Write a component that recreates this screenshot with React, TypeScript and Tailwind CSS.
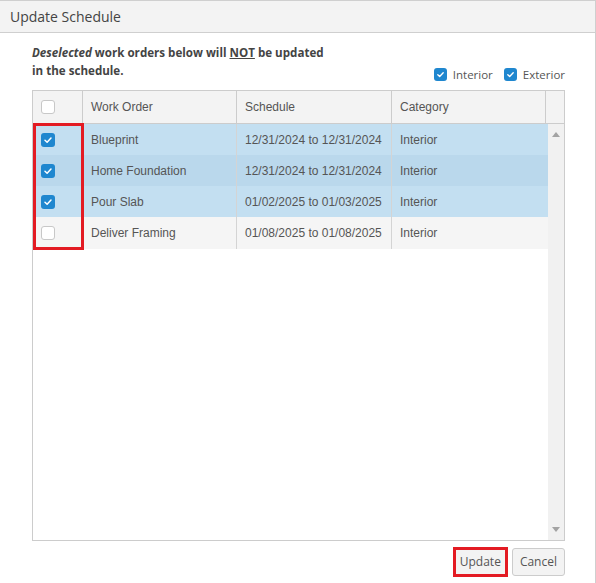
import React from "react";

function Box({ checked, size = 14 }: { checked: boolean; size?: number }) {
  if (checked) {
    return (
      <span
        className="inline-flex items-center justify-center rounded-[3px] bg-[#1f87cf]"
        style={{ width: size, height: size }}
      >
        <svg width={size - 4} height={size - 4} viewBox="0 0 10 10">
          <path d="M2 5.2 L4.1 7.2 L8 3" fill="none" stroke="#fff" strokeWidth="1.5" strokeLinecap="round" strokeLinejoin="round" />
        </svg>
      </span>
    );
  }
  return (
    <span
      className="inline-block rounded-[3px] border border-[#c8c8c8] bg-white"
      style={{ width: size, height: size }}
    />
  );
}

const rows = [
  { checked: true, name: "Blueprint", sched: "12/31/2024 to 12/31/2024", cat: "Interior", bg: "bg-[#c3dff1]" },
  { checked: true, name: "Home Foundation", sched: "12/31/2024 to 12/31/2024", cat: "Interior", bg: "bg-[#bad8ec]" },
  { checked: true, name: "Pour Slab", sched: "01/02/2025 to 01/03/2025", cat: "Interior", bg: "bg-[#c3dff1]" },
  { checked: false, name: "Deliver Framing", sched: "01/08/2025 to 01/08/2025", cat: "Interior", bg: "bg-[#f5f5f5]" },
];

export default function App() {
  return (
    <div className="w-[596px] h-[583px] bg-white overflow-hidden border-t border-r border-[#cfcfcf] text-[#555]" style={{ fontFamily: '"Liberation Sans", Arial, sans-serif' }}>
      <div
        className="h-[32px] bg-[#f3f3f3] border-b border-[#cfcfcf] flex items-center pl-[10px] text-[14px] text-[#444]"
        style={{ fontFamily: '"Open Sans", "Noto Sans", sans-serif' }}
      >
        Update Schedule
      </div>
      <div className="pl-[32px] pr-[30px]">
        <div className="flex items-end justify-between mt-[11px] mb-[9px]">
          <div
            className="text-[11.6px] font-bold leading-[18px] text-[#444] mb-[1px]"
            style={{ fontFamily: '"Open Sans", "Noto Sans", sans-serif' }}
          >
            <div>
              <i>Deselected</i> work orders below will <u>NOT</u> be updated
            </div>
            <div>in the schedule.</div>
          </div>
          <div className="flex items-center text-[11.5px] text-[#555] mb-[-2px]" style={{ fontFamily: '"Open Sans", "Noto Sans", sans-serif' }}>
            <Box checked size={13} />
            <span className="ml-[6px] mr-[11px]">Interior</span>
            <Box checked size={13} />
            <span className="ml-[6px]">Exterior</span>
          </div>
        </div>
        <div className="border border-[#cccccc] h-[451px] flex flex-col text-[12px]">
          <div className="flex h-[33px] bg-[#f3f3f3] border-b border-[#cccccc] shrink-0">
            <div className="w-[50px] border-r border-[#cccccc] flex items-center pl-[8px]">
              <Box checked={false} />
            </div>
            <div className="w-[154px] border-r border-[#cccccc] flex items-center pl-[8px]">Work Order</div>
            <div className="w-[155px] border-r border-[#cccccc] flex items-center pl-[8px]">Schedule</div>
            <div className="w-[154px] border-r border-[#cccccc] flex items-center pl-[8px]">Category</div>
            <div className="flex-1" />
          </div>
          <div className="flex flex-1 min-h-0">
            <div className="w-[515px] relative">
              {rows.map((r, i) => (
                <div key={i} className={`flex ${r.bg}`} style={{ height: i === 3 ? 32 : 31 }}>
                  <div className="w-[50px] border-r border-[#d4d4d4] flex items-center pl-[8px]">
                    <Box checked={r.checked} />
                  </div>
                  <div className="w-[154px] border-r border-[#d4d4d4] flex items-center pl-[8px]">{r.name}</div>
                  <div className="w-[155px] border-r border-[#d4d4d4] flex items-center pl-[8px]">{r.sched}</div>
                  <div className="flex-1 flex items-center pl-[8px]">{r.cat}</div>
                </div>
              ))}
              <div className="absolute left-0 top-[-1px] w-[51px] h-[127px] border-[3px] border-[#e31b23]" />
            </div>
            <div className="flex-1 bg-[#f1f1f1] flex flex-col justify-between items-center py-[8px]">
              <svg width="8" height="5" viewBox="0 0 8 5"><path d="M0 5 L4 0 L8 5 Z" fill="#a3a3a3" /></svg>
              <svg width="8" height="5" viewBox="0 0 8 5"><path d="M0 0 L4 5 L8 0 Z" fill="#a3a3a3" /></svg>
            </div>
          </div>
        </div>
        <div className="flex justify-end items-center mt-[6px] gap-[4px]" style={{ fontFamily: '"Open Sans", "Noto Sans", sans-serif' }}>
          <div className="border-[3px] border-[#e31b23]">
            <div className="h-[24px] px-[4px] bg-[#f3f3f3] flex items-center text-[12px] text-[#555]">Update</div>
          </div>
          <div className="h-[28px] px-[7px] bg-[#f3f3f3] border border-[#cccccc] rounded-[3px] flex items-center text-[12px] text-[#555]">
            Cancel
          </div>
        </div>
      </div>
    </div>
  );
}
